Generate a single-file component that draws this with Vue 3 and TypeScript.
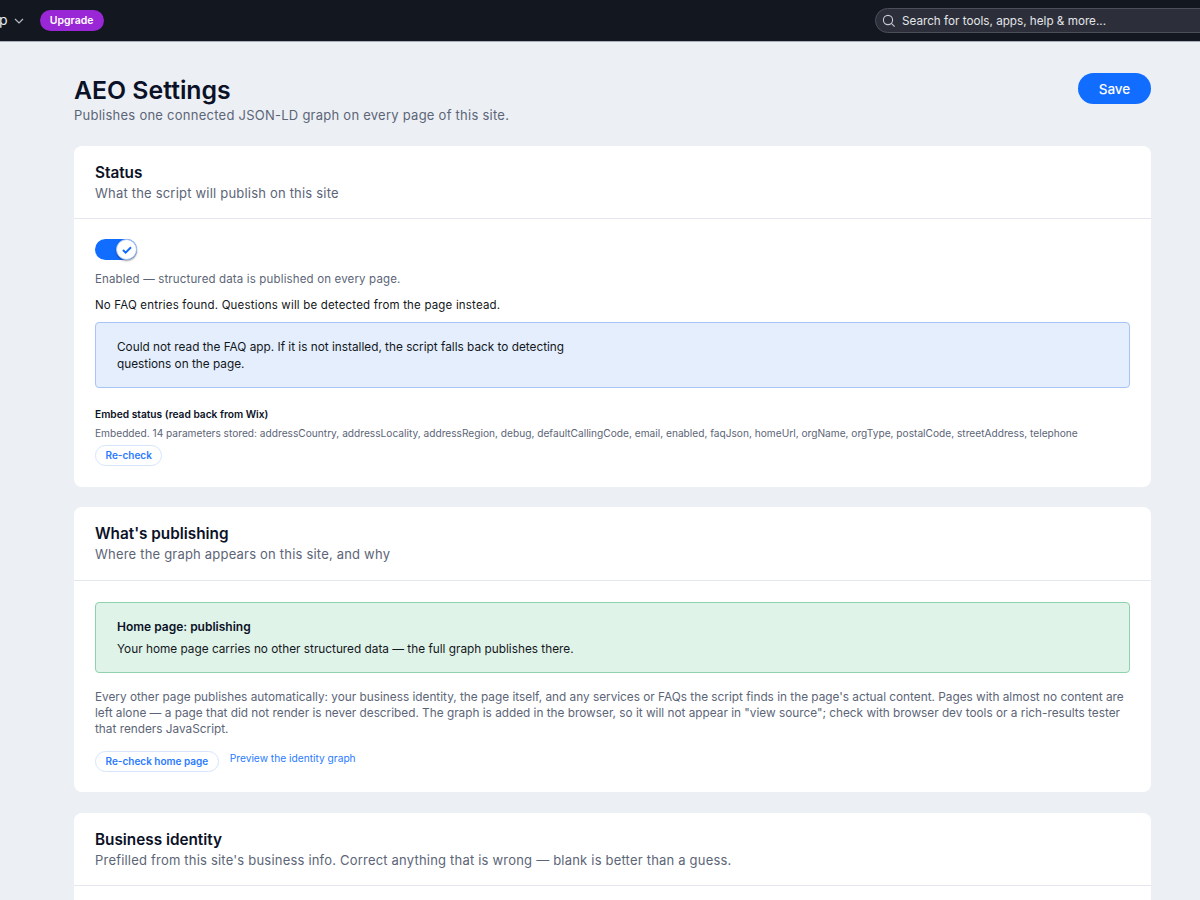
<template>
  <div class="app">
    <header class="topbar">
      <div class="top-left">
        <span class="site">p</span>
        <svg class="chev" width="10" height="6" viewBox="0 0 10 6"><path d="M1 1l4 4 4-4" fill="none" stroke="currentColor" stroke-width="1.2" /></svg>
        <span class="upgrade">Upgrade</span>
      </div>
      <div class="search">
        <svg width="14" height="14" viewBox="0 0 14 14"><circle cx="6" cy="6" r="4.6" fill="none" stroke="currentColor" stroke-width="1.1" /><path d="M9.4 9.4l3.2 3.2" stroke="currentColor" stroke-width="1.1" /></svg>
        <span>Search for tools, apps, help &amp; more...</span>
      </div>
    </header>

    <main class="page">
      <div class="page-head">
        <div>
          <h1>AEO Settings</h1>
          <p class="page-sub">Publishes one connected JSON-LD graph on every page of this site.</p>
        </div>
        <button class="save" type="button">Save</button>
      </div>

      <section class="card">
        <div class="card-head">
          <h2>Status</h2>
          <p>What the script will publish on this site</p>
        </div>
        <div class="card-body">
          <div class="toggle">
            <span class="knob">
              <svg width="10" height="8" viewBox="0 0 10 8"><path d="M1 4l2.6 2.6L9 1.2" fill="none" stroke="#116dff" stroke-width="2" /></svg>
            </span>
          </div>
          <p class="muted enabled">Enabled — structured data is published on every page.</p>
          <p class="plain faq">No FAQ entries found. Questions will be detected from the page instead.</p>
          <div class="notice info">
            <p class="notice-text narrow">Could not read the FAQ app. If it is not installed, the script falls back to detecting questions on the page.</p>
          </div>
          <h3>Embed status (read back from Wix)</h3>
          <p class="tiny">Embedded. {{ params.length }} parameters stored: {{ params.join(', ') }}</p>
          <button class="pill" type="button">Re-check</button>
        </div>
      </section>

      <section class="card publishing">
        <div class="card-head">
          <h2>What's publishing</h2>
          <p>Where the graph appears on this site, and why</p>
        </div>
        <div class="card-body">
          <div class="notice success">
            <strong>Home page: publishing</strong>
            <p class="notice-text">Your home page carries no other structured data — the full graph publishes there.</p>
          </div>
          <p class="muted para">Every other page publishes automatically: your business identity, the page itself, and any services or FAQs the script finds in the page's actual content. Pages with almost no content are left alone — a page that did not render is never described. The graph is added in the browser, so it will not appear in "view source"; check with browser dev tools or a rich-results tester that renders JavaScript.</p>
          <div class="actions">
            <button class="pill" type="button">Re-check home page</button>
            <a class="link" href="#">Preview the identity graph</a>
          </div>
        </div>
      </section>

      <section class="card">
        <div class="card-head">
          <h2>Business identity</h2>
          <p>Prefilled from this site's business info. Correct anything that is wrong — blank is better than a guess.</p>
        </div>
        <div class="card-body"></div>
      </section>
    </main>
  </div>
</template>

<script setup lang="ts">
const params: string[] = [
  'addressCountry',
  'addressLocality',
  'addressRegion',
  'debug',
  'defaultCallingCode',
  'email',
  'enabled',
  'faqJson',
  'homeUrl',
  'orgName',
  'orgType',
  'postalCode',
  'streetAddress',
  'telephone'
];
</script>

<style>
html,
body {
  height: 900px;
  overflow: hidden;
  background: #ecf0f5;
}
</style>

<style scoped>
.app {
  height: 900px;
  overflow: hidden;
  font-family: Inter, 'Noto Sans', sans-serif;
  color: #131720;
  background: #ecf0f5;
}
.topbar {
  height: 42px;
  box-sizing: border-box;
  display: flex;
  align-items: center;
  justify-content: space-between;
  background: #131720;
  border-bottom: 1px solid #a9afb9;
}
.top-left {
  display: flex;
  align-items: center;
}
.site {
  color: #e8ebf0;
  font-size: 14px;
  margin-left: -1px;
  margin-top: -2px;
}
.chev {
  color: #b6bcc7;
  margin-left: 6px;
}
.upgrade {
  margin-left: 16px;
  width: 64px;
  height: 21px;
  line-height: 21px;
  text-align: center;
  border-radius: 11px;
  background: #9a27d5;
  color: #fff;
  font-size: 10.5px;
  font-weight: 600;
}
.search {
  width: 340px;
  height: 25px;
  margin-right: -15px;
  box-sizing: border-box;
  display: flex;
  align-items: center;
  gap: 6px;
  padding-left: 6px;
  border: 1px solid #4a4f5a;
  border-radius: 13px 0 0 13px;
  background: #2c2f39;
  color: #c9cdd4;
  font-size: 11.7px;
}
.search span {
  padding-top: 1px;
  color: #e3e5e9;
}
.page {
  padding: 31px 49px 0 74px;
}
.page-head {
  display: flex;
  justify-content: space-between;
  align-items: flex-start;
  margin-bottom: 22px;
}
h1 {
  margin: 0;
  font-size: 24.8px;
  line-height: 34px;
  font-weight: 600;
  color: #0b1126;
}
.page-sub {
  margin: 0;
  font-size: 13px;
  line-height: 17px;
  letter-spacing: 0.25px;
  color: #5c6577;
}
.save {
  width: 73px;
  height: 31px;
  border: 0;
  border-radius: 16px;
  background: #116dff;
  color: #fff;
  font: 500 13.5px Inter, sans-serif;
}
.card {
  background: #fff;
  border-radius: 8px;
  margin-bottom: 20px;
}
.card-head {
  height: 73px;
  box-sizing: border-box;
  padding: 17px 21px 0;
  border-bottom: 1px solid #e4e8ee;
}
h2 {
  margin: 0;
  font-size: 15.3px;
  line-height: 20px;
  font-weight: 600;
  color: #0b1126;
}
.card-head p {
  margin: 1px 0 0;
  font-size: 13px;
  line-height: 18px;
  letter-spacing: 0.2px;
  color: #5c6577;
}
.card-body {
  padding: 20px 21px 21px;
}
.publishing {
  margin-bottom: 21px;
}
.publishing .card-head {
  height: 74px;
}
.publishing .card-body {
  padding-bottom: 20px;
}
.toggle {
  width: 42px;
  height: 21px;
  border-radius: 11px;
  background: #116dff;
  position: relative;
}
.knob {
  position: absolute;
  right: 0;
  top: 0;
  box-sizing: border-box;
  width: 21px;
  height: 21px;
  border-radius: 50%;
  background: #fff;
  border: 1px solid #a9c6f7;
  box-shadow: 0 1px 2px rgba(19, 23, 32, 0.45);
  display: flex;
  align-items: center;
  justify-content: center;
}
.muted {
  margin: 0;
  font-size: 11.5px;
  line-height: 15px;
  letter-spacing: 0.15px;
  color: #5c6577;
}
.plain {
  margin: 0;
  font-size: 11.5px;
  line-height: 15px;
  letter-spacing: 0.18px;
  color: #131720;
}
.enabled {
  margin-top: 12px;
}
.faq {
  margin-top: 11px;
}
.notice {
  box-sizing: border-box;
  border-radius: 4px;
  border: 1px solid;
  padding: 16px 21px;
}
.notice.info {
  height: 66px;
  margin: 9px 0 20px;
  background: #e4eefd;
  border-color: #a6c4f5;
}
.notice.success {
  height: 71px;
  margin-top: 1px;
  padding-top: 15px;
  background: #e0f3e9;
  border-color: #8fd1ad;
}
.notice strong {
  display: block;
  font-size: 12px;
  line-height: 17px;
  font-weight: 600;
  color: #0b1126;
}
.notice-text {
  margin: 0;
  font-size: 11.8px;
  line-height: 17px;
  color: #131720;
}
.notice.success .notice-text {
  margin-top: 6px;
}
.narrow {
  max-width: 480px;
}
h3 {
  margin: 0;
  font-size: 10.2px;
  line-height: 13px;
  font-weight: 600;
  color: #0b1126;
}
.tiny {
  margin: 5px 0 3px;
  font-size: 10.17px;
  line-height: 14px;
  color: #5c6577;
}
.pill {
  height: 21px;
  padding: 0 9.5px;
  border: 1px solid #d6e5fd;
  border-radius: 11px;
  background: #fff;
  color: #2a7bff;
  font: 600 10px Inter, sans-serif;
}
.para {
  margin-top: 16px;
  font-size: 11.8px;
  line-height: 16px;
  letter-spacing: 0;
}
.actions {
  display: flex;
  align-items: flex-start;
  gap: 11px;
  margin-top: 14px;
}
.link {
  font-size: 10.2px;
  line-height: 15px;
  color: #2a7bff;
  text-decoration: none;
}
</style>
